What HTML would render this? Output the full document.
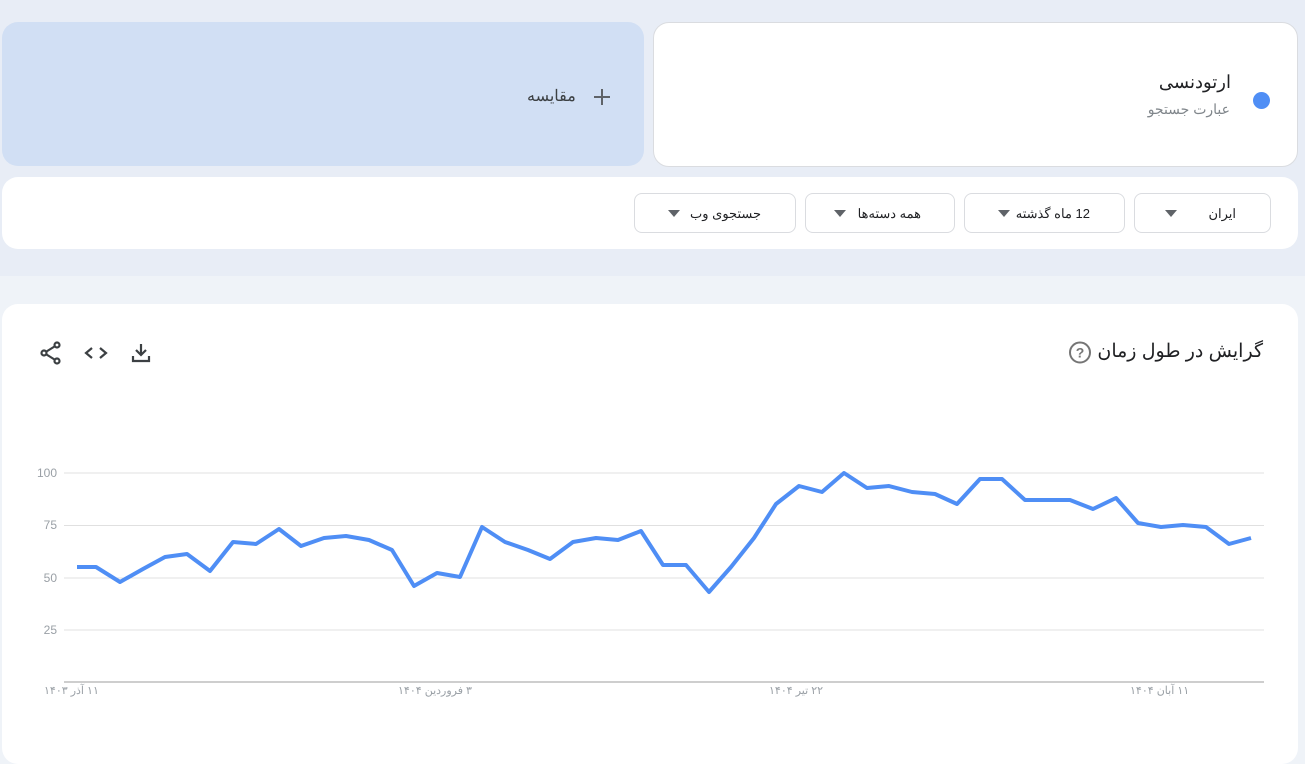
<!DOCTYPE html>
<html dir="ltr"><head><meta charset="utf-8">
<style>
*{margin:0;padding:0;box-sizing:border-box}
body{width:1305px;height:736px;overflow:hidden;background:#eff3f8;font-family:"Liberation Sans","Noto Sans CJK SC",sans-serif;position:relative}
.top{position:absolute;left:0;top:0;width:1305px;height:276px;background:#e8edf6}
.card{position:absolute;border-radius:16px}
.dd{position:absolute;top:193px;height:40px;border:1px solid #dadce0;border-radius:8px;background:#fff;font-size:13px;color:#202124}
.dd .t{position:absolute;top:12px}
.tri{position:absolute;top:16px;width:0;height:0;border-left:6px solid transparent;border-right:6px solid transparent;border-top:7px solid #5f6368}
.ax{position:absolute;font-size:11px;color:#9aa0a6}
</style></head><body>
<div class="top"></div>
<div class="card" style="left:2px;top:22px;width:642px;height:144px;background:#d1dff4"></div>
<div style="position:absolute;left:527px;top:86px;font-size:16px;color:#3c4043" dir="rtl">مقایسه</div>
<div style="position:absolute;left:594px;top:96px;width:16px;height:2px;background:#5f6368"></div>
<div style="position:absolute;left:601px;top:89px;width:2px;height:16px;background:#5f6368"></div>
<div class="card" style="left:653px;top:22px;width:645px;height:145px;background:#fff;border:1px solid #dadce0"></div>
<div style="position:absolute;right:74px;top:72px;font-size:18px;color:#202124" dir="rtl">ارتودنسی</div>
<div style="position:absolute;right:75px;top:101px;font-size:14px;color:#80868b" dir="rtl">عبارت جستجو</div>
<div style="position:absolute;left:1253px;top:92px;width:17px;height:17px;border-radius:50%;background:#4f8ef5"></div>
<div class="card" style="left:2px;top:177px;width:1296px;height:72px;background:#fff"></div>
<div class="dd" style="left:1134px;width:137px"><span class="t" style="right:34px" dir="rtl">ایران</span><span class="tri" style="left:30px"></span></div>
<div class="dd" style="left:964px;width:161px"><span class="t" style="right:34px" dir="rtl">12 ماه گذشته</span><span class="tri" style="left:33px"></span></div>
<div class="dd" style="left:805px;width:150px"><span class="t" style="right:33px" dir="rtl">همه دسته‌ها</span><span class="tri" style="left:28px"></span></div>
<div class="dd" style="left:634px;width:162px"><span class="t" style="right:34px" dir="rtl">جستجوی وب</span><span class="tri" style="left:33px"></span></div>
<div class="card" style="left:2px;top:304px;width:1296px;height:460px;background:#fff"></div>
<div style="position:absolute;right:42px;top:340px;font-size:19px;color:#202124" dir="rtl">گرایش در طول زمان</div>
<svg style="position:absolute;left:1068px;top:341px" width="24" height="24" viewBox="0 0 24 24"><circle cx="12" cy="11.5" r="10" fill="none" stroke="#757575" stroke-width="2"/><text x="12" y="16.5" font-size="14" font-weight="bold" text-anchor="middle" fill="#757575" font-family="Liberation Sans">?</text></svg>
<svg style="position:absolute;left:38px;top:340px" width="120" height="26" viewBox="0 0 120 26">
<g fill="none" stroke="#3c4043" stroke-width="2.2">
<circle cx="19" cy="5" r="2.5"/><circle cx="6" cy="13" r="2.5"/><circle cx="19" cy="21" r="2.5"/>
<path d="M8.5 11.5L16.5 6.5M8.5 14.5L16.5 19.5"/>
<path d="M54 8L48 13L54 18M62 8L68 13L62 18"/>
<path d="M103 4V14M98 10L103 15L108 10M95 16V21H111V16"/>
</g></svg>
<svg style="position:absolute;left:0;top:0" width="1305" height="736">
<g stroke="#e0e0e0" stroke-width="1"><line x1="64" y1="473" x2="1264" y2="473"/><line x1="64" y1="525.5" x2="1264" y2="525.5"/><line x1="64" y1="578" x2="1264" y2="578"/><line x1="64" y1="630" x2="1264" y2="630"/></g>
<line x1="64" y1="682" x2="1264" y2="682" stroke="#b0b0b0" stroke-width="1.2"/>
<g font-size="12" fill="#9aa0a6" font-family="Liberation Sans" text-anchor="end"><text x="57" y="477">100</text><text x="57" y="529">75</text><text x="57" y="582">50</text><text x="57" y="634">25</text></g>
<polyline fill="none" stroke="#4f8ef5" stroke-width="4" stroke-linejoin="round" points="77,567 96,567 120,582 143,569 165,557 187,554 210,571 233,542 256,544 279,529 301,546 324,538 346,536 369,540 392,550 414,586 437,573 460,577 482,527 505,542 528,550 550,559 573,542 596,538 618,540 641,531 663,565 686,565 709,592 731,567 754,538 776,504 799,486 822,492 844,473 867,488 889,486 912,492 935,494 957,504 980,479 1002,479 1025,500 1048,500 1070,500 1093,509 1116,498 1138,523 1161,527 1183,525 1206,527 1229,544 1251,538"/>
</svg>
<div class="ax" style="left:44px;top:684px" dir="rtl">۱۱ آذر ۱۴۰۳</div>
<div class="ax" style="left:398px;top:684px" dir="rtl">۳ فروردین ۱۴۰۴</div>
<div class="ax" style="left:769px;top:684px" dir="rtl">۲۲ تیر ۱۴۰۴</div>
<div class="ax" style="left:1130px;top:684px" dir="rtl">۱۱ آبان ۱۴۰۴</div>
</body></html>
